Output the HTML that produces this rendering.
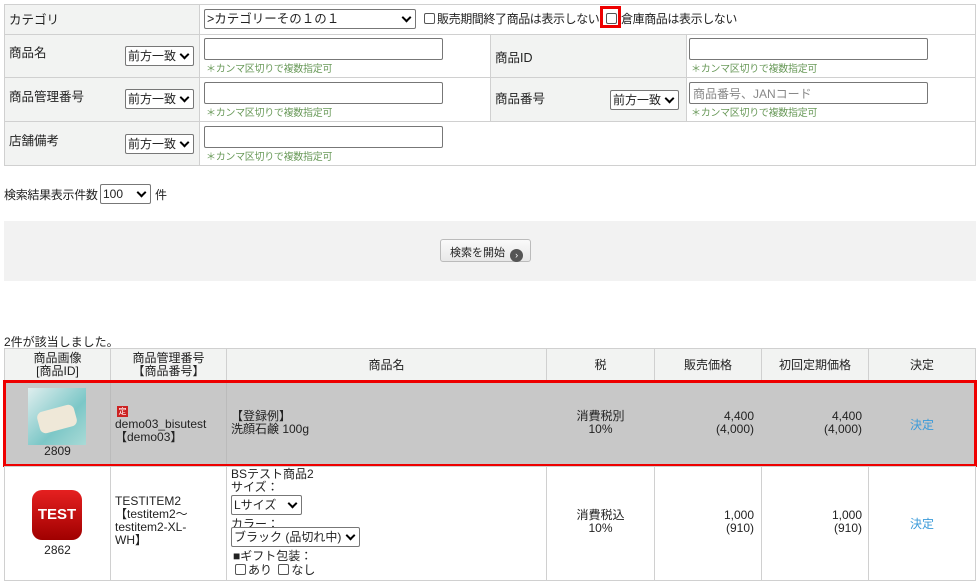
<!DOCTYPE html>
<html><head><meta charset="utf-8"><style>
*{box-sizing:border-box;margin:0;padding:0}
body{width:980px;height:584px;background:#fff;font-family:"Liberation Sans","Noto Sans CJK JP",sans-serif;font-size:12px;color:#222;position:relative;overflow:hidden}
.a{position:absolute}
.c{position:absolute;border:1px solid #d0d0d0}
.lb{background:#f2f3f2}
.sel{position:absolute;height:20px;border:1px solid #777;border-radius:2px;background:#fff;font-size:12px;padding:1px 2px;line-height:16px;white-space:nowrap;overflow:hidden}
.sel:after{content:"";position:absolute;right:5px;top:4px;width:5px;height:5px;border-right:2px solid #000;border-bottom:2px solid #000;transform:rotate(45deg)}
.inp{position:absolute;height:22px;width:239px;border:1px solid #777;border-radius:2px;background:#fff}
.note{position:absolute;font-size:10px;color:#6a9a5a;letter-spacing:-0.3px}
.cb{display:inline-block;width:11px;height:11px;border:1px solid #555;border-radius:2px;vertical-align:-1px;margin-right:2px;background:#fff}
.th{background:#f2f3f2;text-align:center}
.ctr{display:flex;align-items:center;justify-content:center;text-align:center}
</style></head><body>
<div class="c lb" style="left:4px;top:4px;width:196px;height:31px"></div>
<div class="c" style="left:199px;top:4px;width:777px;height:31px"></div>
<div class="c lb" style="left:4px;top:34px;width:196px;height:44px"></div>
<div class="c" style="left:199px;top:34px;width:292px;height:44px"></div>
<div class="c lb" style="left:490px;top:34px;width:197px;height:44px"></div>
<div class="c" style="left:686px;top:34px;width:290px;height:44px"></div>
<div class="c lb" style="left:4px;top:77px;width:196px;height:45px"></div>
<div class="c" style="left:199px;top:77px;width:292px;height:45px"></div>
<div class="c lb" style="left:490px;top:77px;width:197px;height:45px"></div>
<div class="c" style="left:686px;top:77px;width:290px;height:45px"></div>
<div class="c lb" style="left:4px;top:121px;width:196px;height:45px"></div>
<div class="c" style="left:199px;top:121px;width:777px;height:45px"></div>

<div class="a" style="left:9px;top:9px;font-size:12.5px">カテゴリ</div>
<div class="sel" style="left:204px;top:9px;width:212px;font-size:12.5px">&gt;カテゴリーその１の１</div>
<div class="a" style="left:424px;top:10px;font-size:12px;letter-spacing:-0.4px"><span class="cb"></span>販売期間終了商品は表示しない</div>
<div class="a" style="left:600px;top:6px;width:21px;height:22px;border:3px solid #e00"></div>
<div class="a" style="left:606px;top:12px"><span class="cb"></span></div>
<div class="a" style="left:621px;top:10px;letter-spacing:-0.4px">倉庫商品は表示しない</div>

<div class="a" style="left:9px;top:42px;font-size:12.5px">商品名</div>
<div class="sel" style="left:125px;top:46px;width:69px">前方一致</div>
<div class="inp" style="left:204px;top:38px"></div>
<div class="note" style="left:206px;top:60px">＊カンマ区切りで複数指定可</div>
<div class="a" style="left:495px;top:47px;font-size:12.5px">商品ID</div>
<div class="inp" style="left:689px;top:38px"></div>
<div class="note" style="left:691px;top:60px">＊カンマ区切りで複数指定可</div>

<div class="a" style="left:9px;top:86px;font-size:12.5px">商品管理番号</div>
<div class="sel" style="left:125px;top:89px;width:69px">前方一致</div>
<div class="inp" style="left:204px;top:82px"></div>
<div class="note" style="left:206px;top:104px">＊カンマ区切りで複数指定可</div>
<div class="a" style="left:495px;top:88px;font-size:12.5px">商品番号</div>
<div class="sel" style="left:610px;top:90px;width:69px">前方一致</div>
<div class="inp" style="left:689px;top:82px;color:#888;font-size:12px;padding:2px 3px">商品番号、JANコード</div>
<div class="note" style="left:691px;top:104px">＊カンマ区切りで複数指定可</div>

<div class="a" style="left:9px;top:130px;font-size:12.5px">店舗備考</div>
<div class="sel" style="left:125px;top:134px;width:69px">前方一致</div>
<div class="inp" style="left:204px;top:126px"></div>
<div class="note" style="left:206px;top:148px">＊カンマ区切りで複数指定可</div>

<div class="a" style="left:4px;top:186px;letter-spacing:-0.3px">検索結果表示件数</div>
<div class="sel" style="left:100px;top:184px;width:51px">100</div>
<div class="a" style="left:155px;top:186px">件</div>

<div class="a" style="left:4px;top:221px;width:972px;height:60px;background:#f2f2f2"></div>
<div class="a" style="left:440px;top:239px;width:91px;height:23px;border:1px solid #bbb;border-radius:3px;background:linear-gradient(#fafafa,#e8e8e8);font-size:11px;padding:4px 0 0 9px">検索を開始 <span style="display:inline-block;width:13px;height:13px;border-radius:50%;background:#555;color:#fff;font-size:9px;line-height:13px;text-align:center;vertical-align:-2px;margin-left:2px">›</span></div>

<div class="a" style="left:4px;top:333px">2件が該当しました。</div>

<div class="c th" style="left:4px;top:348px;width:107px;height:33px;line-height:13px;padding-top:3px">商品画像<br>[商品ID]</div>
<div class="c th" style="left:110px;top:348px;width:117px;height:33px;line-height:13px;padding-top:3px">商品管理番号<br>【商品番号】</div>
<div class="c th ctr" style="left:226px;top:348px;width:321px;height:33px">商品名</div>
<div class="c th ctr" style="left:546px;top:348px;width:109px;height:33px">税</div>
<div class="c th ctr" style="left:654px;top:348px;width:108px;height:33px">販売価格</div>
<div class="c th ctr" style="left:761px;top:348px;width:108px;height:33px">初回定期価格</div>
<div class="c th ctr" style="left:868px;top:348px;width:108px;height:33px">決定</div>

<div class="a" style="left:4px;top:380px;width:972px;height:87px;background:#c8c8c8"></div>
<div class="a" style="left:110px;top:380px;width:1px;height:87px;background:#bbb"></div>
<div class="a" style="left:226px;top:380px;width:1px;height:87px;background:#bbb"></div>
<div class="a" style="left:28px;top:388px;width:58px;height:57px;background:linear-gradient(135deg,#dfeeee,#7cc7c7 60%,#a9dad6)"></div>
<div class="a" style="left:38px;top:408px;width:38px;height:22px;background:#efe8d8;border-radius:6px;transform:rotate(-15deg)"></div>
<div class="a" style="left:4px;top:444px;width:107px;text-align:center">2809</div>
<div class="a" style="left:117px;top:406px;width:11px;height:11px;background:#c22;color:#fff;font-size:8px;line-height:11px;text-align:center">定</div>
<div class="a" style="left:115px;top:418px;line-height:13px">demo03_bisutest<br>【demo03】</div>
<div class="a" style="left:231px;top:410px;line-height:13px">【登録例】<br>洗顔石鹸 100g</div>
<div class="a" style="left:546px;top:410px;width:109px;text-align:center;line-height:13px">消費税別<br>10%</div>
<div class="a" style="left:654px;top:410px;width:100px;text-align:right;line-height:13px">4,400<br>(4,000)</div>
<div class="a" style="left:761px;top:410px;width:101px;text-align:right;line-height:13px">4,400<br>(4,000)</div>
<div class="a" style="left:868px;top:416px;width:108px;text-align:center;color:#3a9ad9">決定</div>
<div class="a" style="left:3px;top:380px;width:974px;height:87px;border:3px solid #e00"></div>

<div class="c" style="left:4px;top:466px;width:107px;height:115px"></div>
<div class="c" style="left:110px;top:466px;width:117px;height:115px"></div>
<div class="c" style="left:226px;top:466px;width:321px;height:115px"></div>
<div class="c" style="left:546px;top:466px;width:109px;height:115px"></div>
<div class="c" style="left:654px;top:466px;width:108px;height:115px"></div>
<div class="c" style="left:761px;top:466px;width:108px;height:115px"></div>
<div class="c" style="left:868px;top:466px;width:108px;height:115px"></div>
<div class="a" style="left:32px;top:490px;width:50px;height:50px;border-radius:10px;background:linear-gradient(#e52020,#a00000);color:#fff;font-weight:bold;font-size:15px;line-height:50px;text-align:center">TEST</div>
<div class="a" style="left:4px;top:543px;width:107px;text-align:center">2862</div>
<div class="a" style="left:115px;top:495px;line-height:13px">TESTITEM2<br>【testitem2～<br>testitem2-XL-<br>WH】</div>
<div class="a" style="left:231px;top:468px;line-height:13px">BSテスト商品2<br>サイズ：</div>
<div class="sel" style="left:231px;top:495px;width:71px">Lサイズ</div>
<div class="a" style="left:231px;top:515px">カラー：</div>
<div class="sel" style="left:231px;top:527px;width:129px">ブラック (品切れ中)</div>
<div class="a" style="left:233px;top:547px">■ギフト包装：</div>
<div class="a" style="left:235px;top:561px"><span class="cb"></span>あり <span class="cb" style="margin-left:3px"></span>なし</div>
<div class="a" style="left:546px;top:509px;width:109px;text-align:center;line-height:13px">消費税込<br>10%</div>
<div class="a" style="left:654px;top:509px;width:100px;text-align:right;line-height:13px">1,000<br>(910)</div>
<div class="a" style="left:761px;top:509px;width:101px;text-align:right;line-height:13px">1,000<br>(910)</div>
<div class="a" style="left:868px;top:515px;width:108px;text-align:center;color:#3a9ad9">決定</div>
</body></html>
